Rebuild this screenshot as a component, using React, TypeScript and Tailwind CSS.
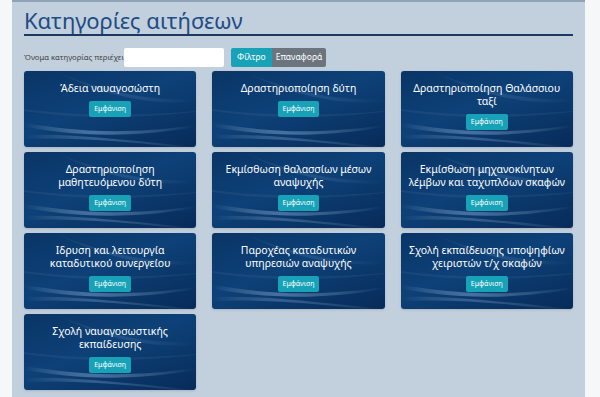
import React from "react";

const categories = [
  "Άδεια ναυαγοσώστη",
  "Δραστηριοποίηση δύτη",
  "Δραστηριοποίηση Θαλάσσιου ταξί",
  "Δραστηριοποίηση μαθητευόμενου δύτη",
  "Εκμίσθωση θαλασσίων μέσων αναψυχής",
  "Εκμίσθωση μηχανοκίνητων λέμβων και ταχυπλόων σκαφών",
  "Ιδρυση και λειτουργία καταδυτικού συνεργείου",
  "Παροχέας καταδυτικών υπηρεσιών αναψυχής",
  "Σχολή εκπαίδευσης υποψηφίων χειριστών τ/χ σκαφών",
  "Σχολή ναυαγοσωστικής εκπαίδευσης",
];

function Waves() {
  // decorative light streaks over the card background
  return (
    <svg
      className="absolute inset-0 w-full h-full pointer-events-none"
      viewBox="0 0 172 76"
      preserveAspectRatio="none"
    >
      <defs>
        <linearGradient id="streak" x1="0" y1="0" x2="1" y2="0">
          <stop offset="0" stopColor="#ffffff" stopOpacity="0" />
          <stop offset="0.4" stopColor="#9cc4ee" stopOpacity="0.4" />
          <stop offset="1" stopColor="#ffffff" stopOpacity="0" />
        </linearGradient>
      </defs>
      <path d="M0 52 C40 58 90 66 172 54 L172 56 C90 70 40 62 0 56 Z" fill="url(#streak)" />
      <path d="M0 64 C50 62 110 70 172 76 L150 76 C100 70 50 66 0 68 Z" fill="url(#streak)" opacity="0.7" />
      <path d="M30 0 C80 20 120 30 172 28 L172 31 C120 34 80 24 30 0 Z" fill="url(#streak)" opacity="0.35" />
      <path d="M0 38 C60 46 120 44 172 40 L172 41 C120 47 60 49 0 40 Z" fill="#ffffff" opacity="0.05" />
    </svg>
  );
}

function Card({ title }: { title: string }) {
  return (
    <div className="relative h-[76px] overflow-hidden rounded-[3px] bg-[linear-gradient(160deg,#0a3566_0%,#0d4178_45%,#072b59_100%)] shadow-sm">
      <Waves />
      <div className="relative flex flex-col items-center px-[4px] pt-[11px] text-center">
        <div className="text-[10.5px] leading-[13px] text-white">{title}</div>
        <button className="mt-[6px] rounded-[2px] bg-[#17a2b8] px-[5px] py-[4px] text-[7px] leading-[8px] text-white">
          Εμφάνιση
        </button>
      </div>
    </div>
  );
}

export default function App() {
  return (
    <div className="h-[397px] w-[600px] overflow-hidden bg-[#f6f7f8] font-['Noto_Sans','Open_Sans',sans-serif]">
      <div className="ml-[12px] h-full w-[573px] border-t-2 border-[#8fa3b8] bg-[#c2cfdc] px-[12px]">
        <h1 className="border-b-2 border-[#1b3a63] pb-[1px] pt-[5px] text-[22px] leading-[26px] text-[#1d4c86]">
          Κατηγορίες αιτήσεων
        </h1>
        <div className="mt-[12px] flex items-center">
          <span className="text-[7.7px] text-[#444]">Όνομα κατηγορίας περιέχει</span>
          <input className="h-[19px] w-[100px] rounded-[2px] bg-white outline-none" />
          <button className="ml-[7px] h-[19px] rounded-l-[2px] bg-[#17a2b8] px-[6px] text-[8.5px] text-white">
            Φίλτρο
          </button>
          <button className="h-[19px] rounded-r-[2px] bg-[#6c757d] px-[4px] text-[8.5px] text-white">
            Επαναφορά
          </button>
        </div>
        <div className="mt-[4px] grid grid-cols-3 gap-x-[16px] gap-y-[5px]">
          {categories.map((c) => (
            <Card key={c} title={c} />
          ))}
        </div>
      </div>
    </div>
  );
}
